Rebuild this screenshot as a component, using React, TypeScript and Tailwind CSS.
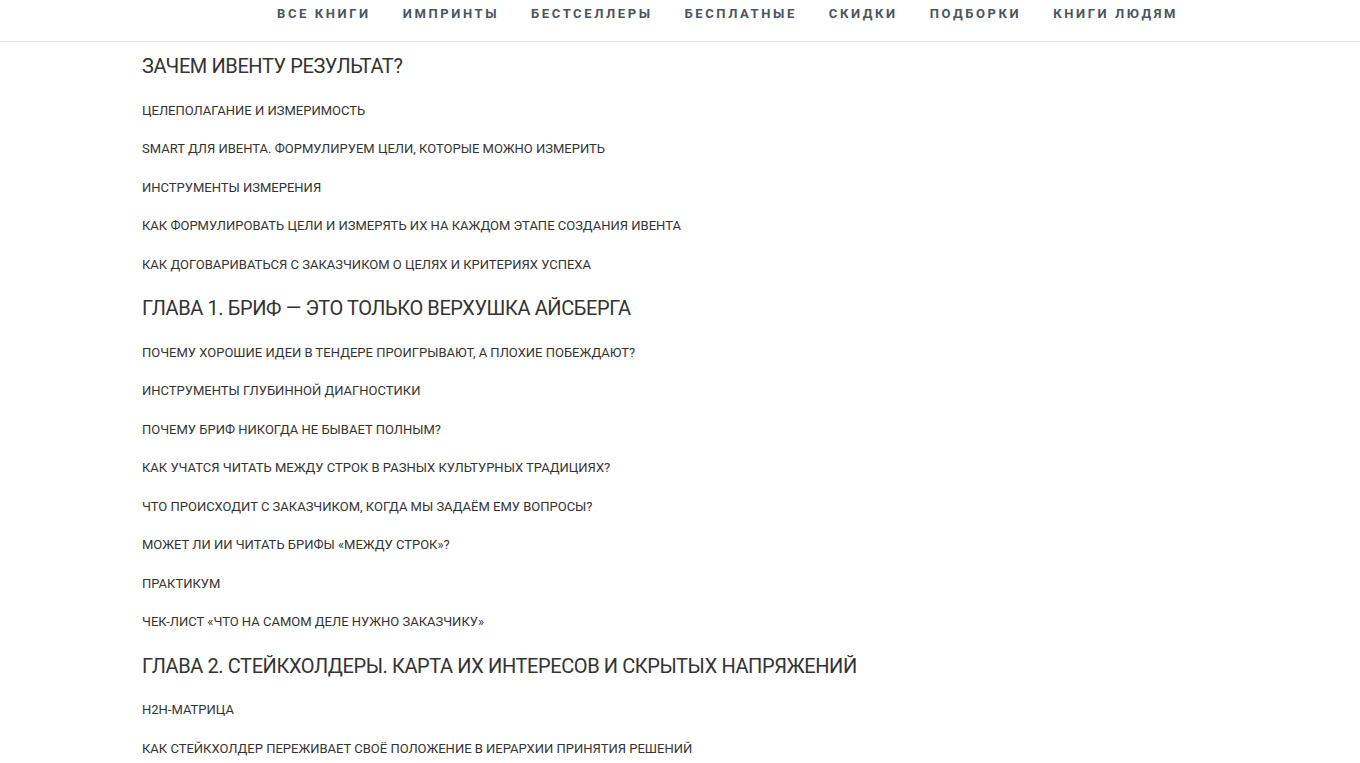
import React from 'react';

const nav = ['Все книги', 'Импринты', 'Бестселлеры', 'Бесплатные', 'Скидки', 'Подборки', 'Книги людям'];

const toc: { title: string; items: string[] }[] = [
  {
    title: 'Зачем ивенту результат?',
    items: [
      'Целеполагание и измеримость',
      'SMART для ивента. Формулируем цели, которые можно измерить',
      'Инструменты измерения',
      'Как формулировать цели и измерять их на каждом этапе создания ивента',
      'Как договариваться с заказчиком о целях и критериях успеха',
    ],
  },
  {
    title: 'Глава 1. Бриф — это только верхушка айсберга',
    items: [
      'Почему хорошие идеи в тендере проигрывают, а плохие побеждают?',
      'Инструменты глубинной диагностики',
      'Почему бриф никогда не бывает полным?',
      'Как учатся читать между строк в разных культурных традициях?',
      'Что происходит с заказчиком, когда мы задаём ему вопросы?',
      'Может ли ИИ читать брифы «между строк»?',
      'Практикум',
      'Чек-лист «Что на самом деле нужно заказчику»',
    ],
  },
  {
    title: 'Глава 2. Стейкхолдеры. Карта их интересов и скрытых напряжений',
    items: ['H2H-матрица', 'Как стейкхолдер переживает своё положение в иерархии принятия решений'],
  },
];

export default function App() {
  return (
    <div className="min-h-screen bg-white font-['Roboto',sans-serif] text-[#333333]">
      {/* Верхнее меню */}
      <header className="h-[42px] border-b border-[#e4e4ea]">
        <nav className="flex gap-[32px] pl-[277px]">
          {nav.map((n) => (
            <a key={n} href="#" className="text-[13px] font-bold uppercase leading-[28px] tracking-[0.2em] text-[#4b5560]">
              {n}
            </a>
          ))}
        </nav>
      </header>

      {/* Оглавление */}
      <main className="pl-[142px]">
        {toc.map((ch) => (
          <section key={ch.title}>
            <h2 className="pt-[8px] pb-[9.5px] text-[20px] uppercase leading-[32px] tracking-[-0.02em] text-[#333333]">
              {ch.title}
            </h2>
            <ul>
              {ch.items.map((it) => (
                <li key={it} className="text-[13px] uppercase leading-[38.5px] text-[#333333]">
                  {it}
                </li>
              ))}
            </ul>
          </section>
        ))}
      </main>
    </div>
  );
}
